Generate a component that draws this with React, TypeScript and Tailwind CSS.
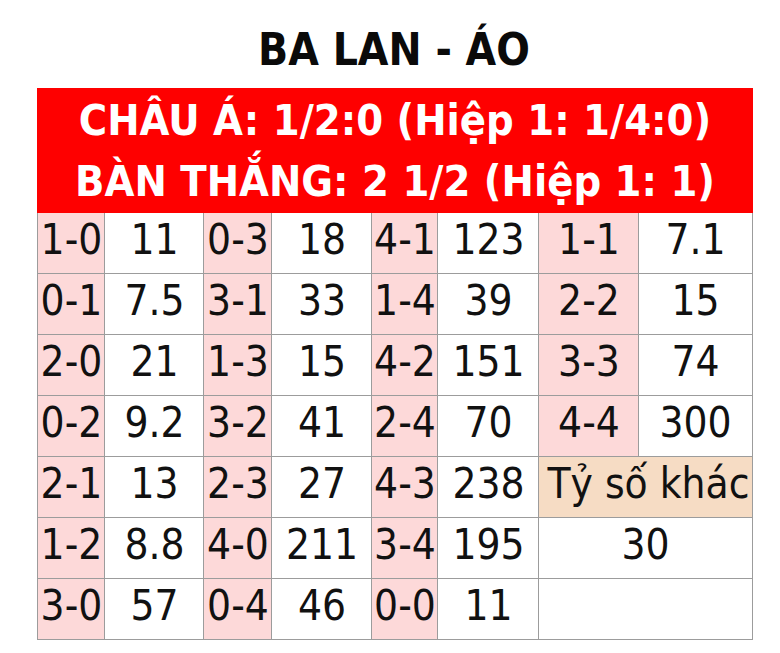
const rows: [string, string, string, string, string, string, string?, string?][] = [
  ['1-0', '11', '0-3', '18', '4-1', '123', '1-1', '7.1'],
  ['0-1', '7.5', '3-1', '33', '1-4', '39', '2-2', '15'],
  ['2-0', '21', '1-3', '15', '4-2', '151', '3-3', '74'],
  ['0-2', '9.2', '3-2', '41', '2-4', '70', '4-4', '300'],
  ['2-1', '13', '2-3', '27', '4-3', '238'],
  ['1-2', '8.8', '4-0', '211', '3-4', '195'],
  ['3-0', '57', '0-4', '46', '0-0', '11'],
];

const widths = ['w-[67px]', 'w-[99px]', 'w-[68px]', 'w-[100px]', 'w-[66px]', 'w-[101px]', 'w-[100px]', 'w-[113px]'];

const cell = 'border border-[#9c9c9c] h-[61px] p-0 pb-[6px] text-center align-middle whitespace-nowrap';
const score = cell + ' bg-[#fdd9d9]';
const odd = cell + ' bg-white';

export default function App() {
  return (
    <div className="w-[780px] h-[653px] bg-white font-['DejaVu_Sans_Condensed','DejaVu_Sans',sans-serif] [font-stretch:condensed] text-[#111]">
      <div className="flex flex-col items-center pt-[28px]">
        <h1 className="text-[44px] leading-[44px] font-bold text-[#0a0a0a] pl-[8px]">BA LAN - ÁO</h1>
        <table className="mt-[16px] border-collapse table-fixed w-[714px] ml-[10px]">
          <colgroup>
            {widths.map((w, i) => (
              <col key={i} className={w} />
            ))}
          </colgroup>
          <thead>
            <tr>
              <th colSpan={8} className="bg-[#fe0000] text-white font-bold text-[43px] leading-[61px] p-0 h-[124px] border border-[#fe0000]">
                <div>CHÂU Á: 1/2:0 (Hiệp 1: 1/4:0)</div>
                <div>BÀN THẮNG: 2 1/2 (Hiệp 1: 1)</div>
              </th>
            </tr>
          </thead>
          <tbody className="text-[42px] leading-[40px]">
            {rows.map((r, ri) => (
              <tr key={ri}>
                <td className={score}>{r[0]}</td>
                <td className={odd}>{r[1]}</td>
                <td className={score}>{r[2]}</td>
                <td className={odd}>{r[3]}</td>
                <td className={score}>{r[4]}</td>
                <td className={odd}>{r[5]}</td>
                {ri < 4 && (
                  <>
                    <td className={score}>{r[6]}</td>
                    <td className={odd}>{r[7]}</td>
                  </>
                )}
                {ri === 4 && (
                  <td colSpan={2} className={cell + ' bg-[#f6dcc4] pl-[6px]'}>
                    Tỷ số khác
                  </td>
                )}
                {ri === 5 && (
                  <td colSpan={2} className={odd}>
                    30
                  </td>
                )}
                {ri === 6 && <td colSpan={2} className={odd}></td>}
              </tr>
            ))}
          </tbody>
        </table>
      </div>
    </div>
  );
}
